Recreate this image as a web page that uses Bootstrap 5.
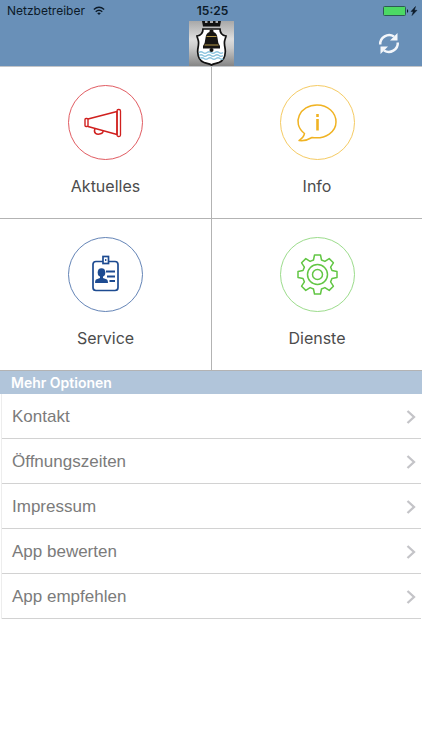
<!DOCTYPE html>
<html lang="de">
<head>
<meta charset="utf-8">
<meta name="viewport" content="width=device-width, initial-scale=1">
<title>Mehr Optionen</title>
<link href="https://cdn.jsdelivr.net/npm/bootstrap@5.3.0/dist/css/bootstrap.min.css" rel="stylesheet">
<style>
body { font-family: Inter, "Liberation Sans", sans-serif; background: #fff; }
.top { background: #6990b8; border-bottom: 1px solid #c3c5c8; }
.statusbar { height: 21px; font-size: 12px; line-height: 22px; color: #0c1a28; padding: 0 4px 0 7px; }
.statusbar > div { flex: 1 1 0; }
.clock { font-weight: 600; }
.toolbar { height: 45px; }
.toolbar > div { flex: 1 1 0; }
.reload { width: 24px; height: 24px; line-height: 0; margin-right: 21px; }
.tile { padding: 18px 0 20px; border-bottom: 1px solid #b3b3b3; color: #4c4c4c; font-size: 16px; line-height: 24px; }
.tile:hover { color: #4c4c4c; }
.tile svg { margin-bottom: 14px; }
.tile-split { border-left: 1px solid #b3b3b3; }
.section-title { background: #b1c5da; color: #fff; font-size: 14px; line-height: 23px; padding: 0 11px; font-weight: 600; }
.options { margin: 0 1px; border-left: 1px solid #ededed; }
.option { font-family: "Liberation Sans", sans-serif; font-size: 17px; line-height: 42px; color: #7b7b7b; padding: 2px 5px 0 10px; border-bottom: 1px solid #d2d2d2; }
.option:hover { color: #7b7b7b; }
</style>
<script src="https://cdn.jsdelivr.net/npm/bootstrap@5.3.0/dist/js/bootstrap.bundle.min.js"></script>
</head>
<body>
<header class="top">
  <div class="statusbar d-flex">
    <div class="d-flex align-items-center"><span>Netzbetreiber</span>
      <svg class="ms-2" width="12" height="10" viewBox="0 0 14 11" fill="none" stroke="#0c1a28" stroke-width="1.700"><path d="M1 3.700Q7-1.500 13 3.700M3.200 6.300Q7 3 10.800 6.300"/><path d="M4.900 8.100Q7 6.400 9.100 8.100L7 10.200Z" fill="#0c1a28" stroke="none"/></svg>
    </div>
    <span class="clock">15:25</span>
    <div class="d-flex align-items-center justify-content-end">
      <svg width="36" height="12" viewBox="0 0 36 12"><rect x="1.500" y="1.500" width="22" height="9" rx="1" fill="#4cd964" stroke="#2d5a55"/><path d="M25 4q2.500 2 0 4z" fill="#0c1a28"/><path d="M33.500 1.500 29 6.500h2.300L30 10.500 35 5.300h-2.600z" fill="#0c1a28" stroke="#0c1a28" stroke-width=".5"/></svg>
    </div>
  </div>
  <div class="toolbar d-flex align-items-center">
    <div></div>
    <svg width="45" height="45" viewBox="0 0 45 45" role="img" aria-label="Wappen">
      <defs><linearGradient id="metal" x1="0" y1="0" x2="0" y2="1"><stop offset="0" stop-color="#a8a8a8"/><stop offset=".4" stop-color="#dedede"/><stop offset=".6" stop-color="#c9c9c9"/><stop offset="1" stop-color="#858585"/></linearGradient></defs>
      <rect width="45" height="45" fill="url(#metal)"/>
      <path d="M13 0h3v2h2.500V0h2.500v2h3V0h2.500v2H29V0h3l-1 5.500H14z" fill="#111"/>
      <path d="M14 8h17c0 4 2 6.500 6 7-.5 3-2 4-1.500 8 0 3 1 4 .8 8-.3 6-2 9-6.300 10.500-3 1-5.500 1-7.500 2.500-2-1.500-4.500-1.500-7.500-2.500C10.700 40 9 37 8.700 31c-.2-4 .8-5 .8-8C10 19 8.500 18 8 15c4-.5 6-3 6-7z" fill="#fff" stroke="#111" stroke-width="1.700"/>
      <path d="M10 31.500q2-1.500 4 0t4 0 4 0 4 0 4 0 4 0M10 34.500q2-1.500 4 0t4 0 4 0 4 0 4 0 4 0M11 37.500q2-1.500 4 0t4 0 4 0 4 0 4 0 3 0" fill="none" stroke="#8cc4de" stroke-width="1.400"/>
      <path d="M20.500 9.500q2-2 4 0v1.500q3.500 1 4 6 .3 5 2.500 8v2.500H14V25q2.200-3 2.500-8 .5-5 4-6z" fill="#171512"/>
      <circle cx="22.500" cy="29" r="2" fill="#171512"/><path d="M17.500 15.500h10M15.500 24h14" stroke="#b39748" stroke-width="1.200"/>
    </svg>
    <div class="d-flex justify-content-end">
      <button type="button" class="btn p-0 border-0 reload" aria-label="Aktualisieren"><svg width="24" height="24" viewBox="0 0 24 24"><g fill="none" stroke="#f3f6fa" stroke-width="2.500"><path d="M3.200 12.500A9 9 0 0 1 17 4.500"/><path d="M20.800 10.500A9 9 0 0 1 7 18.500"/></g><path d="M20.500 1v7.500H13zM3.500 22v-7.500H11z" fill="#f3f6fa"/></svg></button>
    </div>
  </div>
</header>
<main>
  <nav class="row g-0 text-center" aria-label="Bereiche">
    <div class="col-6"><a href="#aktuelles" class="tile d-flex flex-column align-items-center text-decoration-none">
      <svg width="75" height="75" viewBox="0 0 75 75" fill="none" stroke="#d0201e"><circle cx="37.500" cy="37.500" r="37" stroke-width=".9" stroke="#dc4a50"/><path d="M20 34 49 26.500V49.500L20 41.500" stroke-width="1.500"/><rect x="17" y="33.500" width="3" height="8" rx="1" stroke-width="1.400"/><rect x="49" y="24.500" width="3.500" height="27" rx="1.500" stroke-width="1.300"/><path d="M27 43.500c-2 5 2 6 4.500 5.500s4-1.500 3.500-3.300" stroke-width="1.500"/></svg>
      <span>Aktuelles</span></a></div>
    <div class="col-6"><a href="#info" class="tile tile-split d-flex flex-column align-items-center text-decoration-none">
      <svg width="75" height="75" viewBox="0 0 75 75" fill="none" stroke="#f0b323"><circle cx="37.500" cy="37.500" r="37" stroke-width=".9" stroke="#f3c451"/><path d="M24.500 48.500C11 38 20 20 37 20c11 0 19 7.500 19 17S46 54.500 32 52.500c-4 2.500-9 3.500-13 3 3-2 5-4.500 5.500-7z" stroke-width="1.500" stroke-linejoin="round"/><path d="M37.500 34v11.500M37.500 29v3" stroke-width="2.600"/></svg>
      <span>Info</span></a></div>
    <div class="col-6"><a href="#service" class="tile d-flex flex-column align-items-center text-decoration-none">
      <svg width="75" height="75" viewBox="0 0 75 75" fill="none" stroke="#1d4b91"><circle cx="37.500" cy="37.500" r="37" stroke-width=".9" stroke="#5276ae"/><rect x="25" y="24.500" width="25" height="29" rx="3" stroke-width="1.700"/><rect x="35" y="19.500" width="5.500" height="7" fill="#fff" stroke-width="1.700"/><path d="M37.700 22v2" stroke-width="1.300"/><g fill="#1d4b91" stroke="none"><ellipse cx="33.500" cy="35.500" rx="3.800" ry="4.300"/><path d="M32 38h3v3l4 1.500q1 .5 1 3.500H27q0-3 1-3.500l4-1.500z"/></g><path d="M38 34.500h9M39 39.500h8M41.500 44h5.500" stroke-width="2.200"/></svg>
      <span>Service</span></a></div>
    <div class="col-6"><a href="#dienste" class="tile tile-split d-flex flex-column align-items-center text-decoration-none">
      <svg width="75" height="75" viewBox="-37.500 -37.500 75 75" fill="none" stroke="#62c644"><circle r="37" stroke-width=".9" stroke="#90d77e"/><path d="M-4-14.500-3-19.500H3L4-14.500 7.400-13.100 11.700-15.900 15.900-11.700 13.100-7.400 14.500-4 19.500-3V3L14.500 4 13.100 7.400 15.900 11.700 11.700 15.900 7.400 13.100 4 14.500 3 19.500H-3L-4 14.500-7.400 13.100-11.700 15.900-15.900 11.700-13.100 7.400-14.500 4-19.500 3V-3L-14.500-4-13.100-7.400-15.900-11.700-11.700-15.900-7.400-13.100Z" stroke-width="1.500" stroke-linejoin="round"/><circle r="10" stroke-width="1.500"/><circle r="5" stroke-width="1.500"/></svg>
      <span>Dienste</span></a></div>
  </nav>
  <h2 class="section-title mb-0">Mehr Optionen</h2>
  <nav class="options" aria-label="Mehr Optionen">
    <a href="#kontakt" class="option d-flex align-items-center justify-content-between text-decoration-none">Kontakt<svg width="10" height="16" viewBox="0 0 10 16" fill="none" stroke="#c4c4c8" stroke-width="2.300"><path d="m1.500 2 6.500 6-6.500 6"/></svg></a>
    <a href="#zeiten" class="option d-flex align-items-center justify-content-between text-decoration-none">Öffnungszeiten<svg width="10" height="16" viewBox="0 0 10 16" fill="none" stroke="#c4c4c8" stroke-width="2.300"><path d="m1.500 2 6.500 6-6.500 6"/></svg></a>
    <a href="#impressum" class="option d-flex align-items-center justify-content-between text-decoration-none">Impressum<svg width="10" height="16" viewBox="0 0 10 16" fill="none" stroke="#c4c4c8" stroke-width="2.300"><path d="m1.500 2 6.500 6-6.500 6"/></svg></a>
    <a href="#bewerten" class="option d-flex align-items-center justify-content-between text-decoration-none">App bewerten<svg width="10" height="16" viewBox="0 0 10 16" fill="none" stroke="#c4c4c8" stroke-width="2.300"><path d="m1.500 2 6.500 6-6.500 6"/></svg></a>
    <a href="#empfehlen" class="option d-flex align-items-center justify-content-between text-decoration-none">App empfehlen<svg width="10" height="16" viewBox="0 0 10 16" fill="none" stroke="#c4c4c8" stroke-width="2.300"><path d="m1.500 2 6.500 6-6.500 6"/></svg></a>
  </nav>
</main>
</body>
</html>
